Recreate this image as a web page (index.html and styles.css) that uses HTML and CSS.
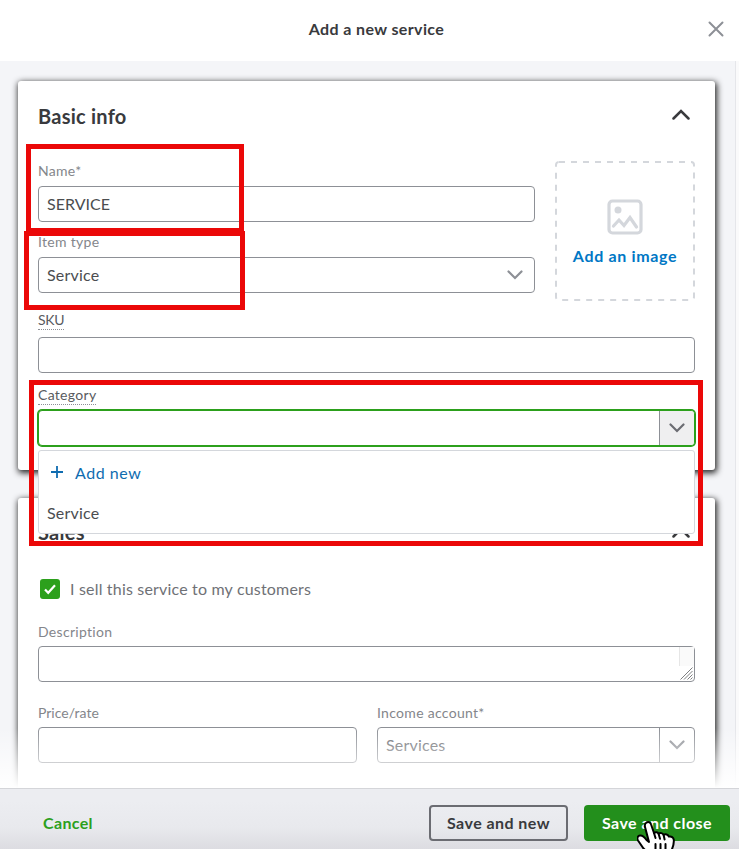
FILE: index.html
```html
<!DOCTYPE html>
<html lang="en">
<head>
<meta charset="utf-8">
<title>Add a new service</title>
<link rel="stylesheet" href="styles.css">
</head>
<body>
<div class="modal">
  <header class="modal-header">
    <h1 class="modal-title">Add a new service</h1>
    <svg class="close" viewBox="0 0 16 16"><path d="M1.500 1.500l13 13M14.500 1.500l-13 13"/></svg>
  </header>

  <main class="modal-body">
    <section class="card card-basic">
      <div class="card-head">
        <h2>Basic info</h2>
        <svg class="collapse" viewBox="0 0 18 11"><path d="M1.500 9.500L9 2l7.500 7.500"/></svg>
      </div>
      <div class="intro">
        <div class="intro-fields">
          <div class="field">
            <span class="label">Name*</span>
            <div class="input caps">SERVICE</div>
          </div>
          <div class="field">
            <span class="label">Item type</span>
            <div class="input select">Service
              <svg class="chevron" viewBox="0 0 16 10"><path d="M1.500 1.500L8 8l6.500-6.500"/></svg>
            </div>
          </div>
        </div>
        <div class="image-drop">
          <svg class="drop-border" viewBox="0 0 140 140"><rect x="1" y="1" width="138" height="138" rx="3"/></svg>
          <svg class="picture" viewBox="0 0 36 36">
            <rect x="2" y="2" width="32" height="32" rx="3.500"/>
            <circle cx="11" cy="11" r="3.500"/>
            <path d="M6.500 27l5.500-6 5 5.500 6-8 6.500 9.500"/>
          </svg>
          <span class="drop-text">Add an image</span>
        </div>
      </div>
      <div class="field field-sku">
        <span class="label hint sku">SKU</span>
        <div class="input"></div>
      </div>
      <div class="field field-category">
        <span class="label hint">Category</span>
        <div class="input combo focused">
          <span class="combo-value"></span>
          <span class="combo-button"><svg class="chevron" viewBox="0 0 16 10"><path d="M1.500 1.500L8 8l6.500-6.500"/></svg></span>
        </div>
        <div class="menu">
          <div class="menu-item menu-add"><svg class="plus" viewBox="0 0 12 12"><path d="M6 0v12M0 6h12"/></svg>Add new</div>
          <div class="menu-item">Service</div>
        </div>
      </div>
    </section>

    <section class="card card-sales">
      <div class="card-head">
        <h2>Sales</h2>
        <svg class="collapse" viewBox="0 0 18 11"><path d="M1.500 9.500L9 2l7.500 7.500"/></svg>
      </div>
      <div class="check-row">
        <span class="checkbox"><svg viewBox="0 0 20 20"><path d="M5 10.500l3.200 3.300 6.800-7.500"/></svg></span>
        <span class="check-text">I sell this service to my customers</span>
      </div>
      <div class="field field-description">
        <span class="label">Description</span>
        <div class="input textarea">
          <span class="scroll"></span>
          <svg class="grip" viewBox="0 0 13 13"><path d="M.5 12.500l12-12M4 12.500l8.500-8.500M7.500 12.500l5-5M10.500 12.500l2-2"/></svg>
        </div>
      </div>
      <div class="pair">
        <div class="field">
          <span class="label price">Price/rate</span>
          <div class="input"></div>
        </div>
        <div class="field">
          <span class="label">Income account*</span>
          <div class="input combo">
            <span class="combo-value">Services</span>
            <span class="combo-button"><svg class="chevron" viewBox="0 0 16 10"><path d="M1.500 1.500L8 8l6.500-6.500"/></svg></span>
          </div>
        </div>
      </div>
    </section>
    <div class="fade"></div>
  </main>

  <footer class="modal-footer">
    <span class="cancel">Cancel</span>
    <span class="button outline">Save and new</span>
    <span class="button primary">Save and close</span>
  </footer>

  <div class="mark mark-name"></div>
  <div class="mark mark-type"></div>
  <div class="mark mark-category"></div>

  <svg class="cursor" viewBox="0 0 40 40">
    <path d="M9.500 4.500c2-1 4 0 4.600 2l2.900 8.500c1.500-1 3.500-1 4.600.8 1.600-1.300 4-.8 5 1 1.800-1.100 4.500-.3 5.300 1.800 2.500-.6 4.600.7 4.900 3.200.4 4.500-1.300 9-4 14.200v4H17L6.500 30.500 1 22.500c-1.500-2.500-.2-4.600 2-4.900 2.200-.3 4.200 1.200 6.500 4.400L12 24 8 9c-.5-2 .2-3.700 1.500-4.500z"/>
    <path class="fingers" d="M17 15l1.500 5M21.600 15.800l1.400 5M26.600 17l1 4.500M18.500 26v8M23.500 26v8M28.500 26v8"/>
  </svg>
</div>
</body>
</html>
```
FILE: styles.css
```css
* { box-sizing: border-box; }

body {
  margin: 0;
  font-family: Lato, "Open Sans", sans-serif;
  font-size: 16px;
  letter-spacing: 0.2px;
  color: #4b4d50;
}

svg { display: block; fill: none; flex: none; }
h1, h2 { margin: 0; font-weight: 700; color: #393a3d; }

.modal {
  position: relative;
  display: flex;
  flex-direction: column;
  width: 739px;
  height: 849px;
  overflow: hidden;
  background: #fff;
}

.modal-header {
  flex: none;
  display: flex;
  align-items: center;
  height: 61px;
  padding: 0 15px 3px 45px;
}
.modal-title {
  flex: 1;
  text-align: center;
  font-size: 16px;
  letter-spacing: 0.38px;
  line-height: 20px;
}
.close { width: 16px; height: 16px; stroke: #8d9096; stroke-width: 2; stroke-linecap: round; }

.modal-body {
  position: relative;
  flex: none;
  height: 727px;
  padding: 20px 20px 0 18px;
  overflow: hidden;
  background: linear-gradient(to right, #f4f5f8 735px, #e5e6ea 735px 736px, #fafafb 736px);
}

.card {
  width: 697px;
  padding: 0 20px;
  border-radius: 3px;
  background: #fff;
  box-shadow: 1px 2px 6px 1px rgba(0, 0, 0, 0.85);
}
.card-basic { height: 389px; margin-bottom: 28px; }
.card-sales { height: 400px; }

.card-head {
  display: flex;
  justify-content: space-between;
  align-items: center;
  height: 80px;
  padding: 0 5px 10px 0;
}
.card-head h2 { font-size: 20px; letter-spacing: 0.25px; }
.card-sales .card-head { padding-bottom: 12px; }
.card-sales .collapse { margin-top: 0; }
.collapse { width: 18px; height: 11px; margin-top: -4px; stroke: #393a3d; stroke-width: 2.500; stroke-linecap: round; }

.intro { display: flex; gap: 20px; height: 149px; }
.intro-fields { flex: 1; display: flex; flex-direction: column; gap: 10px; }

.field { display: flex; flex-direction: column; align-items: flex-start; gap: 5px; }
.label {
  height: 20px;
  font-size: 14px;
  line-height: 20px;
  letter-spacing: 0.3px;
  color: #84868b;
}
.label.hint { color: #595b60; border-bottom: 1px dotted #8d9096; }
.label.sku { letter-spacing: -0.3px; }
.label.price { letter-spacing: 0; }
.input {
  display: flex;
  align-items: center;
  width: 100%;
  height: 36px;
  padding: 0 8px 2px;
  border: 1px solid #8d9096;
  border-radius: 4px;
  background: #fff;
}
.caps { letter-spacing: 0; }
.select { justify-content: space-between; padding-right: 11px; }
.select .chevron { margin-top: 1px; }
.chevron { width: 16px; height: 10px; stroke: #8d9096; stroke-width: 2.200; stroke-linecap: round; }

.image-drop {
  position: relative;
  display: flex;
  flex-direction: column;
  align-items: center;
  width: 140px;
  height: 140px;
  padding-top: 38px;
}
.drop-border {
  position: absolute;
  inset: 0;
  stroke: #d4d7dc;
  stroke-width: 2;
  stroke-dasharray: 6 6;
}
.picture { width: 36px; height: 36px; stroke: #d4d7dc; stroke-width: 3.200; stroke-linecap: round; }
.picture circle { fill: #d4d7dc; stroke: none; }
.drop-text {
  margin-top: 11px;
  font-weight: 700;
  line-height: 20px;
  letter-spacing: 0.65px;
  color: #0077c5;
}

.field-sku { gap: 7px; }
.field-category { position: relative; margin-top: 12px; gap: 5px; }

.combo { padding: 0; align-items: stretch; }
.combo-value { flex: 1; padding-left: 8px; line-height: 34px; color: #6b6d72; }
.combo-button {
  display: flex;
  align-items: center;
  justify-content: center;
  width: 35px;
  border-left: 1px solid #8d9096;
}
.focused { border-color: #2ca01c; box-shadow: 0 0 0 1px #2ca01c; }
.focused .combo-button { background: #efeff0; border-radius: 0 3px 3px 0; }
.focused .chevron { stroke: #6b6c72; }

.menu {
  position: absolute;
  top: 65px;
  left: 0;
  z-index: 2;
  width: 657px;
  height: 84px;
  padding-top: 1px;
  border: 1px solid #d4d7dc;
  border-radius: 3px;
  background: #fff;
}
.menu-item { display: flex; align-items: center; height: 40px; padding-left: 8px; }
.menu-add { gap: 12px; padding-left: 12px; color: #0f6cb0; letter-spacing: 0.55px; }
.plus { width: 12px; height: 12px; stroke: #0f6cb0; stroke-width: 1.800; }

.check-row { display: flex; align-items: center; gap: 10px; height: 24px; padding-left: 2px; margin-top: -1px; }
.checkbox { width: 20px; height: 20px; border-radius: 3px; background: #2ca01c; }
.checkbox svg { stroke: #fff; stroke-width: 2.200; }
.check-text { color: #6f7176; letter-spacing: 0.18px; padding-bottom: 2px; }

.field-description { margin-top: 21px; gap: 4px; }
.textarea { position: relative; }
.scroll { position: absolute; top: 0; right: 0; width: 15px; height: 19px; border-left: 1px solid #e6e6e6; background: #fafafa; }
.grip { position: absolute; right: 1px; bottom: 1px; width: 13px; height: 13px; stroke: #7d7e80; }

.pair { display: grid; grid-template-columns: 319px 318px; gap: 20px; margin-top: 21px; }
.pair .field { gap: 4px; }

.fade {
  position: absolute;
  left: 0;
  right: 0;
  bottom: 0;
  height: 60px;
  background: linear-gradient(rgba(255, 255, 255, 0), #fff);
}

.modal-footer {
  flex: none;
  display: flex;
  align-items: center;
  height: 61px;
  padding: 7px 9px 0 43px;
  border-top: 1px solid #d4d5d9;
  background: linear-gradient(#ecedf1 20%, #e8e9ed 65%, #dcdce1);
  font-weight: 700;
}
.cancel { flex: 1; color: #2ca01c; letter-spacing: 0.35px; }
.button {
  display: flex;
  align-items: center;
  justify-content: center;
  height: 36px;
  border-radius: 4px;
  letter-spacing: 0.45px;
}
.outline { width: 139px; margin-right: 16px; border: 2px solid #6b6c72; color: #393a3d; }
.primary { width: 146px; background: #238f1c; color: #fff; }

.mark { position: absolute; z-index: 3; border: 5px solid #eb0808; }
.mark-name { left: 26px; top: 144px; width: 218px; height: 89px; }
.mark-type { left: 24px; top: 231px; width: 221px; height: 79px; }
.mark-category { left: 29px; top: 380px; width: 674px; height: 166px; }

.cursor {
  position: absolute;
  left: 637px;
  top: 818px;
  width: 40px;
  height: 40px;
  fill: #fff;
  stroke: #000;
  stroke-width: 2;
  stroke-linejoin: round;
}
.cursor .fingers { fill: none; stroke-linecap: round; }
```
